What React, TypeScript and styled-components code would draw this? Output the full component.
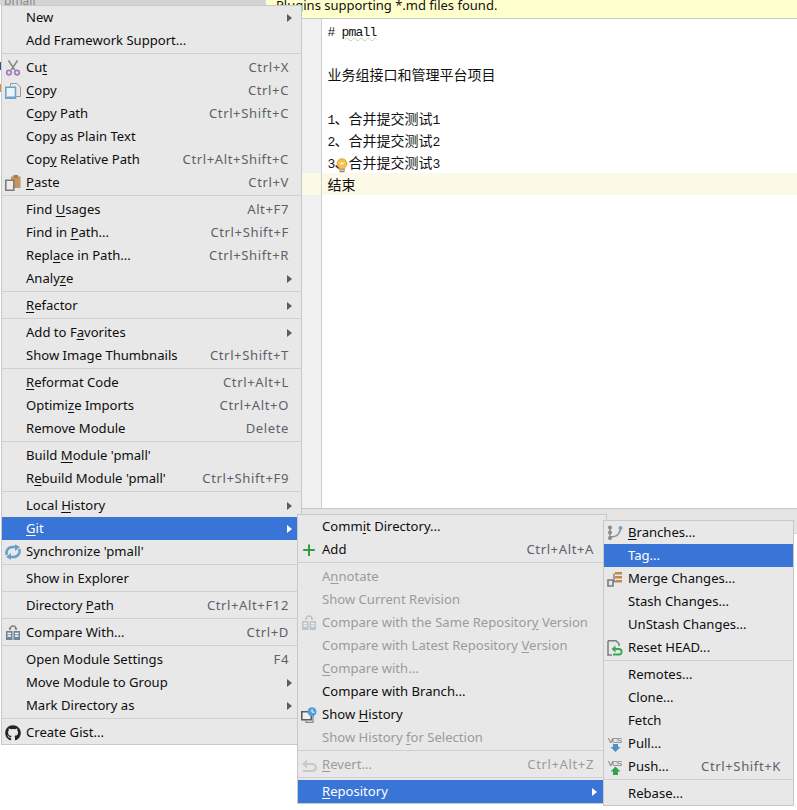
import * as React from 'react';
import styled, { createGlobalStyle } from 'styled-components';
import { FaGithub } from 'react-icons/fa';

const GlobalStyle = createGlobalStyle`
  html, body {
    margin: 0;
    padding: 0;
    background: #fff;
  }
`;

const Page = styled.div`
  position: relative;
  display: flex;
  width: 797px;
  height: 810px;
  overflow: hidden;
  font-family: "Noto Sans", "Open Sans", sans-serif;
`;

const Sidebar = styled.div`
  width: 266px;
  flex: none;
  background: #fff;
`;

const SidebarTitle = styled.div`
  height: 5px;
  overflow: hidden;
  background: #d4d4d4;
  color: #8a8a8a;
  font-size: 12px;
  line-height: 2px;
  padding-left: 4px;
`;

const SideMark = styled.div<{ $top: number; $color: string }>`
  position: absolute;
  left: 0;
  top: ${p => p.$top}px;
  width: 1px;
  height: 8px;
  background: ${p => p.$color};
`;

const Main = styled.div`
  flex: 1;
  display: flex;
  flex-direction: column;
`;

const Banner = styled.div`
  height: 18px;
  flex: none;
  padding-left: 10px;
  background: #ffffcc;
  border-bottom: 1px solid #c9c9c9;
  color: #111;
  font-size: 13px;
  line-height: 11px;
`;

const Editor = styled.div`
  height: 489px;
  flex: none;
  display: flex;
  background: #fff;
  border-bottom: 1px solid #c6c6c6;
`;

const Gutter = styled.div`
  width: 55px;
  flex: none;
  padding-top: 154px;
  background: #f0f0f0;
  border-right: 1px solid #d0d0d0;
`;

const GutterCurrent = styled.div`
  height: 22px;
  background: #fdf9e7;
`;

const Lines = styled.div`
  flex: 1;
  display: flex;
  flex-direction: column;
`;

const Line = styled.div<{ $current?: boolean }>`
  position: relative;
  height: 22px;
  padding-left: 5.5px;
  background: ${p => (p.$current ? '#fdf9e7' : 'transparent')};
  color: #111;
  font-family: "Noto Sans CJK SC", sans-serif;
  font-size: 14px;
  line-height: 22px;
  white-space: pre;
`;

const Latin = styled.span<{ $squiggle?: boolean }>`
  font-family: "Liberation Mono", monospace;
  font-size: 13px;
  letter-spacing: -0.8px;
  text-decoration: ${p => (p.$squiggle ? 'underline wavy #b7d9b3 1px' : 'none')};
`;

const BulbSpot = styled.span`
  position: absolute;
  left: 14px;
  top: 7px;
  width: 12px;
  height: 15px;
  line-height: 0;
`;

const BottomBar = styled.div`
  height: 24px;
  flex: none;
  background: #e4e4e4;
  border-bottom: 1px solid #d4d4d4;
`;

const Menu = styled.div<{ $left: number; $top: number; $width: number }>`
  position: absolute;
  left: ${p => p.$left}px;
  top: ${p => p.$top}px;
  width: ${p => p.$width}px;
  box-sizing: border-box;
  display: flex;
  flex-direction: column;
  background: #e8e8e8;
  border: 1px solid #c8c8c8;
`;

const Separator = styled.div`
  height: 1px;
  margin: 1px 0 2px;
  background: #cfcfcf;
`;

const Row = styled.div<{ $selected?: boolean; $disabled?: boolean }>`
  height: 23px;
  display: flex;
  align-items: center;
  padding: 0 12px 0 3px;
  background: ${p => (p.$selected ? '#3875d7' : 'transparent')};
  color: ${p => (p.$selected ? '#fff' : p.$disabled ? '#9b9b9b' : '#0e0e0e')};
  font-size: 13.08px;
  white-space: nowrap;
`;

const IconSlot = styled.span<{ $faded?: boolean }>`
  width: 16px;
  height: 16px;
  flex: none;
  margin-right: 5px;
  opacity: ${p => (p.$faded ? 0.35 : 1)};
  color: #232323;
  svg {
    display: block;
    width: 16px;
    height: 16px;
  }
`;

const Label = styled.span`
  flex: 1;
  padding-bottom: 2px;
  u {
    text-underline-offset: 2px;
    text-decoration-thickness: 1px;
  }
`;

const Shortcut = styled.span<{ $disabled?: boolean }>`
  margin-left: 16px;
  padding-bottom: 2px;
  letter-spacing: 0.6px;
  color: ${p => (p.$disabled ? '#9b9b9b' : '#5d6268')};
`;

const Arrow = styled.span<{ $selected?: boolean }>`
  width: 0;
  height: 0;
  margin-right: -3px;
  border-left: 5px solid ${p => (p.$selected ? '#fff' : '#5c5c5c')};
  border-top: 4.5px solid transparent;
  border-bottom: 4.5px solid transparent;
`;

const Scissors = () => (
  <svg viewBox="0 0 16 16" fill="none">
    <path d="M3.500 .5 9.800 10M12.500 .5 6.200 10" stroke="#8a8a8a" strokeWidth="1.600" />
    <circle cx="4" cy="12.600" r="2.300" stroke="#a678c4" strokeWidth="1.700" />
    <circle cx="12" cy="12.600" r="2.300" stroke="#a678c4" strokeWidth="1.700" />
  </svg>
);

const CopyIcon = () => (
  <svg viewBox="0 0 16 16" fill="none">
    <path d="M5.500.5h6.500l3.500 3.500v9.500H5.500z" fill="#e8e8e8" stroke="#9a9a9a" />
    <path d="M.8 4.300h9.700v11H.8z" fill="#eef3f7" stroke="#6ea2c9" strokeWidth="1.600" />
    <path d="M2 13.500h8v2H2z" fill="#6ea2c9" />
  </svg>
);

const PasteIcon = () => (
  <svg viewBox="0 0 16 16" fill="none">
    <path d="M6 1.500h9.500V13H6z" fill="#c6955f" />
    <path d="M8.500 0h4.500v3H8.500z" fill="#a8794a" />
    <path d="M.8 5.300h8v9.900h-8z" fill="#ededed" stroke="#7d7d7d" strokeWidth="1.600" />
  </svg>
);

const SyncIcon = () => (
  <svg viewBox="0 0 16 16" fill="none" stroke="#6a9fc8" strokeWidth="2.600">
    <path d="M1.800 11C.6 7 3 3 7.500 3H11" />
    <path d="M14.200 5c1.200 4-1.200 8-5.700 8H5" />
    <path d="M10 .2 15 3 10 7zM6 9 1 13l5 2.800z" fill="#6a9fc8" stroke="none" />
  </svg>
);

const CompareIcon = () => (
  <svg viewBox="0 0 16 16" fill="none">
    <path d="M5 4.500C5 2 6.500 1 8 1s3 1 3 3.500" stroke="#7d7d7d" strokeWidth="1.300" />
    <path d="M3.500 3 5 5.500 6.500 3zM9.500 3 11 5.500 12.500 3z" fill="#7d7d7d" />
    <path d="M1 6h6.500v9H1zM8.500 6H15v9H8.500z" fill="#6f8496" />
    <path d="M2.500 8.500h3.500M2.500 11h3.500M10 8.500h3.500M10 11h3.500" stroke="#fff" strokeWidth="1.300" />
  </svg>
);

const PlusIcon = () => (
  <svg viewBox="0 0 16 16" fill="none">
    <path d="M8 2.500v11.500M2.200 8h11.600" stroke="#2f9e49" strokeWidth="2" />
  </svg>
);

const HistoryIcon = () => (
  <svg viewBox="0 0 16 16" fill="none">
    <path d="M.8 4.800h9.500v8H.8z" fill="#f0f0f0" stroke="#5c5c5c" strokeWidth="1.600" />
    <path d="M5 13v2.300h7V9" stroke="#8c8c8c" strokeWidth="1.300" />
    <circle cx="11" cy="4.800" r="4.500" fill="#4e9fdc" />
    <path d="M11 2.200v3h2.500" stroke="#fff" />
  </svg>
);

const RevertIcon = () => (
  <svg viewBox="0 0 16 16" fill="none">
    <path d="M4 7h7c5 0 5 7 0 7H2" stroke="#909090" strokeWidth="2.200" />
    <path d="M6 2.500 1 7l5 4.500z" fill="#909090" />
  </svg>
);

const BranchIcon = () => (
  <svg viewBox="0 0 16 16" fill="none">
    <path d="M3 4v8M3 12c5 0 9-1 10.500-8" stroke="#8c8c8c" strokeWidth="1.300" />
    <circle cx="3" cy="2.500" r="2" fill="#8a8a8a" />
    <circle cx="3" cy="7.500" r="2" fill="#8a8a8a" />
    <circle cx="3" cy="13" r="2" fill="#8a8a8a" />
    <circle cx="13.500" cy="3" r="2" fill="#6ea2c9" />
  </svg>
);

const MergeIcon = () => (
  <svg viewBox="0 0 16 16" fill="none">
    <path d="M1 9h5v6H1zM6 10.500h3" stroke="#7a7a7a" strokeWidth="1.600" />
    <path d="M7 2.500V10" stroke="#7a7a7a" strokeWidth="1.300" />
    <path d="M8 1h7v2.500H8zM8 5h7v2.500H8zM9 9h6v2.500H9z" fill="#bf8a4f" />
  </svg>
);

const ResetIcon = () => (
  <svg viewBox="0 0 16 16" fill="none">
    <path d="M1 .8h8l3 3V6M1 .8V15h4" stroke="#7d7d7d" strokeWidth="1.500" />
    <path d="M8 9h4c3.500 0 3.500 5.500 0 5.500H6" stroke="#34a853" strokeWidth="1.800" />
    <path d="M8.500 5.500 4.500 9l4 3.500z" fill="#34a853" />
  </svg>
);

const VcsLabel = styled.text`
  font-family: "Liberation Sans", sans-serif;
  font-size: 8px;
  fill: #6b6b6b;
`;

const PullIcon = () => (
  <svg viewBox="0 0 16 16" fill="none">
    <VcsLabel x="1" y="6.500" textLength="14">VCS</VcsLabel>
    <path d="M6 8h5v3h2.500l-5 5-5-5H6z" fill="#4b93c3" />
  </svg>
);

const PushIcon = () => (
  <svg viewBox="0 0 16 16" fill="none">
    <VcsLabel x="1" y="6.500" textLength="14">VCS</VcsLabel>
    <path d="M8.500 7.500l5 5H11V16H6v-3.500H3.500z" fill="#35a24f" />
  </svg>
);

const Bulb = () => (
  <svg width="12" height="15" viewBox="0 0 14 17" fill="none">
    <path d="M7 .5a5.800 5.800 0 0 0-3.500 10.400V12h7v-1.100A5.800 5.800 0 0 0 7 .5z" fill="#f5c34c" stroke="#e0a02a" />
    <path d="M4.500 5l1.500 2 1-2 1 2 1.500-2" stroke="#fff" />
    <path d="M3.500 13.500h7M4 15.700h6" stroke="#8a8a8a" strokeWidth="1.500" />
  </svg>
);

type Item = {
  label: string;
  shortcut?: string;
  icon?: React.ReactNode;
  faded?: boolean;
  more?: boolean;
  selected?: boolean;
  disabled?: boolean;
};

const SEP = 'sep' as const;

const mainItems: (Item | typeof SEP)[] = [
  { label: 'New', more: true },
  { label: 'Add Framework Support...' },
  SEP,
  { label: 'Cu&t', shortcut: 'Ctrl+X', icon: <Scissors /> },
  { label: '&Copy', shortcut: 'Ctrl+C', icon: <CopyIcon /> },
  { label: 'C&opy Path', shortcut: 'Ctrl+Shift+C' },
  { label: 'Copy as Plain Text' },
  { label: 'Cop&y Relative Path', shortcut: 'Ctrl+Alt+Shift+C' },
  { label: '&Paste', shortcut: 'Ctrl+V', icon: <PasteIcon /> },
  SEP,
  { label: 'Find &Usages', shortcut: 'Alt+F7' },
  { label: 'Find in &Path...', shortcut: 'Ctrl+Shift+F' },
  { label: 'Repl&ace in Path...', shortcut: 'Ctrl+Shift+R' },
  { label: 'Analy&ze', more: true },
  SEP,
  { label: '&Refactor', more: true },
  SEP,
  { label: 'Add to F&avorites', more: true },
  { label: 'Show Image Thumbnails', shortcut: 'Ctrl+Shift+T' },
  SEP,
  { label: '&Reformat Code', shortcut: 'Ctrl+Alt+L' },
  { label: 'Optimi&ze Imports', shortcut: 'Ctrl+Alt+O' },
  { label: 'Remove Module', shortcut: 'Delete' },
  SEP,
  { label: "Build &Module 'pmall'" },
  { label: "R&ebuild Module 'pmall'", shortcut: 'Ctrl+Shift+F9' },
  SEP,
  { label: 'Local &History', more: true },
  { label: '&Git', more: true, selected: true },
  { label: "Synchronize 'pmall'", icon: <SyncIcon /> },
  SEP,
  { label: 'Show in Explorer' },
  SEP,
  { label: 'Directory &Path', shortcut: 'Ctrl+Alt+F12' },
  SEP,
  { label: 'Compare With...', shortcut: 'Ctrl+D', icon: <CompareIcon /> },
  SEP,
  { label: 'Open Module Settings', shortcut: 'F4' },
  { label: 'Move Module to Group', more: true },
  { label: 'Mark Directory as', more: true },
  SEP,
  { label: 'Create Gist...', icon: <FaGithub /> },
];

const gitItems: (Item | typeof SEP)[] = [
  { label: 'Comm&it Directory...' },
  { label: 'Add', shortcut: 'Ctrl+Alt+A', icon: <PlusIcon /> },
  SEP,
  { label: 'A&nnotate', disabled: true },
  { label: 'Show Current Revision', disabled: true },
  { label: 'Compare with the Same Repositor&y Version', disabled: true, icon: <CompareIcon />, faded: true },
  { label: 'Compare with Latest Repository &Version', disabled: true },
  { label: '&Compare with...', disabled: true },
  { label: 'Compare with Branch...' },
  { label: 'Show &History', icon: <HistoryIcon /> },
  { label: 'Show History &for Selection', disabled: true },
  SEP,
  { label: '&Revert...', shortcut: 'Ctrl+Alt+Z', disabled: true, icon: <RevertIcon />, faded: true },
  SEP,
  { label: '&Repository', more: true, selected: true },
];

const repoItems: (Item | typeof SEP)[] = [
  { label: '&Branches...', icon: <BranchIcon /> },
  { label: 'Tag...', selected: true },
  { label: 'Merge Changes...', icon: <MergeIcon /> },
  { label: 'Stash Changes...' },
  { label: 'UnStash Changes...' },
  { label: 'Reset HEAD...', icon: <ResetIcon /> },
  SEP,
  { label: 'Remotes...' },
  { label: 'Clone...' },
  { label: 'Fetch' },
  { label: 'Pull...', icon: <PullIcon /> },
  { label: 'Push...', shortcut: 'Ctrl+Shift+K', icon: <PushIcon /> },
  SEP,
  { label: 'Rebase...' },
];

// '&' marks the mnemonic letter, same as in the action titles
function mnemonic(label: string) {
  const at = label.indexOf('&');
  if (at < 0) return label;
  return (
    <>
      {label.slice(0, at)}
      <u>{label[at + 1]}</u>
      {label.slice(at + 2)}
    </>
  );
}

function PopupMenu(props: { items: (Item | typeof SEP)[]; left: number; top: number; width: number }) {
  const { items, left, top, width } = props;
  return (
    <Menu $left={left} $top={top} $width={width}>
      {items.map((item, i) =>
        item === SEP ? (
          <Separator key={i} />
        ) : (
          <Row key={i} $selected={item.selected} $disabled={item.disabled}>
            <IconSlot $faded={item.faded}>{item.icon}</IconSlot>
            <Label>{mnemonic(item.label)}</Label>
            {item.shortcut && <Shortcut $disabled={item.disabled}>{item.shortcut}</Shortcut>}
            {item.more && <Arrow $selected={item.selected} />}
          </Row>
        ),
      )}
    </Menu>
  );
}

export default function App() {
  return (
    <>
      <GlobalStyle />
      <Page>
        <Sidebar>
          <SidebarTitle>pmall</SidebarTitle>
          <SideMark $top={62} $color="#2a4fa8" />
          <SideMark $top={84} $color="#e08a3c" />
        </Sidebar>
        <Main>
          <Banner>Plugins supporting *.md files found.</Banner>
          <Editor>
            <Gutter>
              <GutterCurrent />
            </Gutter>
            <Lines>
              <Line>
                <Latin># </Latin>
                <Latin $squiggle>pmall</Latin>
              </Line>
              <Line />
              <Line>业务组接口和管理平台项目</Line>
              <Line />
              <Line>
                <Latin>1</Latin>、合并提交测试<Latin>1</Latin>
              </Line>
              <Line>
                <Latin>2</Latin>、合并提交测试<Latin>2</Latin>
              </Line>
              <Line>
                <Latin>3</Latin>、合并提交测试<Latin>3</Latin>
                <BulbSpot>
                  <Bulb />
                </BulbSpot>
              </Line>
              <Line $current>结束</Line>
            </Lines>
          </Editor>
          <BottomBar />
        </Main>
        <PopupMenu items={mainItems} left={1} top={5} width={301} />
        <PopupMenu items={gitItems} left={297} top={514} width={310} />
        <PopupMenu items={repoItems} left={603} top={520} width={191} />
      </Page>
    </>
  );
}
